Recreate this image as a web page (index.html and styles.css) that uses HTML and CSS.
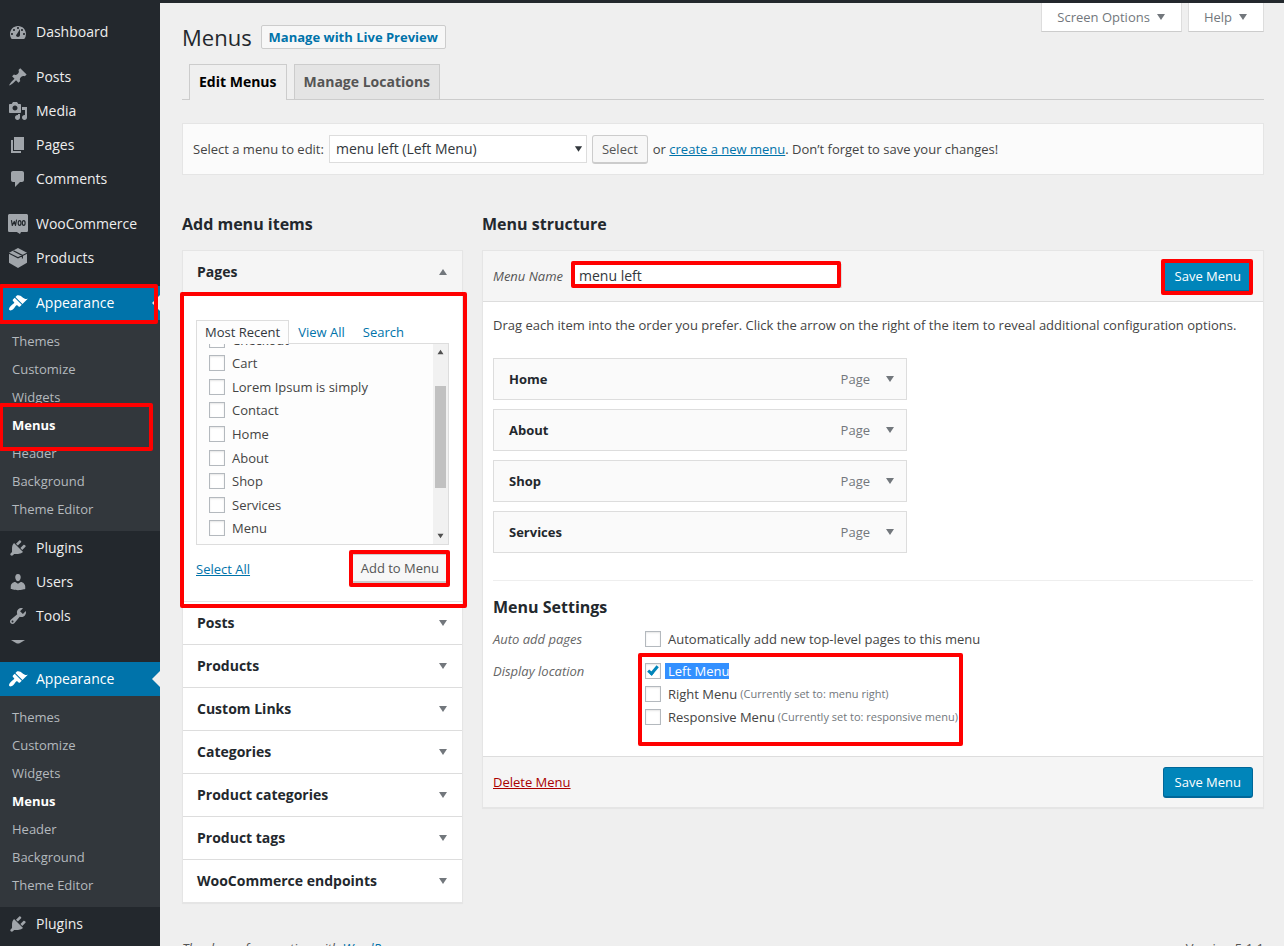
FILE: index.html
```html
<!DOCTYPE html>
<html lang="en">
<head>
<meta charset="utf-8">
<meta name="viewport" content="width=device-width, initial-scale=1">
<title>Menus</title>
<link rel="stylesheet" href="styles.css">
</head>
<body>
<svg class="sprite" aria-hidden="true">
  <symbol id="i-dashboard" viewBox="0 0 20 20"><path fill-rule="evenodd" d="M3.76 17h12.48A7.99 7.99 0 0 0 18 12c0-4.41-3.58-8-8-8s-8 3.59-8 8c0 1.9.66 3.64 1.76 5zM10 5c.55 0 1 .45 1 1s-.45 1-1 1-1-.45-1-1 .45-1 1-1zM6 7c.55 0 1 .45 1 1s-.45 1-1 1-1-.45-1-1 .45-1 1-1zm8 0c.55 0 1 .45 1 1s-.45 1-1 1-1-.45-1-1 .45-1 1-1zm-5.37 5.55L12 7v6c0 1.1-.9 2-2 2s-2-.9-2-2c0-.57.24-.08.63-.45zM4 11c.55 0 1 .45 1 1s-.45 1-1 1-1-.45-1-1 .45-1 1-1zm12 0c.55 0 1 .45 1 1s-.45 1-1 1-1-.45-1-1 .45-1 1-1z"/></symbol>
  <symbol id="i-post" viewBox="0 0 20 20"><path d="M10.44 3.02l1.82-1.82 6.36 6.35-1.83 1.82c-1.05-.68-2.48-.57-3.41.36l-.75.75c-.92.93-1.04 2.35-.35 3.41l-1.83 1.82-2.41-2.41-2.8 2.79c-.42.42-3.38 2.71-3.8 2.29s1.86-3.39 2.28-3.81l2.79-2.79L4.1 9.36l1.83-1.82c1.05.69 2.48.57 3.4-.36l.75-.75c.93-.92 1.05-2.35.36-3.41z"/></symbol>
  <symbol id="i-media" viewBox="0 0 20 20"><path fill-rule="evenodd" d="M13 11V4c0-.55-.45-1-1-1h-1.67L9 1H5L3.67 3H2c-.55 0-1 .45-1 1v7c0 .55.45 1 1 1h10c.55 0 1-.45 1-1zM7 4.5c1.38 0 2.5 1.12 2.5 2.5S8.38 9.5 7 9.5 4.5 8.38 4.5 7 5.62 4.5 7 4.5zM14 6h5v10.5c0 1.38-1.12 2.5-2.5 2.5S14 17.88 14 16.5s1.12-2.5 2.5-2.5c.17 0 .34.02.5.05V9h-3V6zm-4 8.05V13h2v3.5c0 1.38-1.12 2.5-2.5 2.5S7 17.88 7 16.5 8.12 14 9.5 14c.17 0 .34.02.5.05z"/></symbol>
  <symbol id="i-page" viewBox="0 0 20 20"><path d="M6 15V2h10v13H6zm-1 1h8v2H3V5h2v11z"/></symbol>
  <symbol id="i-comment" viewBox="0 0 20 20"><path d="M5 2h9c1.1 0 2 .9 2 2v7c0 1.1-.9 2-2 2h-2l-5 5v-5H5c-1.1 0-2-.9-2-2V4c0-1.1.9-2 2-2z"/></symbol>
  <symbol id="i-woo" viewBox="0 0 20 20"><path d="M1.6 0h16.8c.9 0 1.6.7 1.6 1.600v14.800c0 .9-.7 1.600-1.600 1.600H13l-1 2-3.200-2H1.600C.7 18 0 17.300 0 16.400V1.600C0 .7.7 0 1.600 0z"/><g fill="none" stroke="#23282d" stroke-width="1.200" stroke-linejoin="round" stroke-linecap="round"><path d="M3.500 6.500l.8 5 2-4 1.200 4 1-5.500"/><ellipse cx="11.600" cy="9" rx="1.400" ry="2.300"/><ellipse cx="15.700" cy="9" rx="1.400" ry="2.300"/></g></symbol>
  <symbol id="i-product" viewBox="0 0 20 20"><path d="M10 0l9 4.800v10L10 20l-9-5.200v-10z"/><path fill="none" stroke="#23282d" stroke-width="1.100" d="M1 5.200L10 9.800l9-4.600M5.400 2.800l9 4.600v3.200"/></symbol>
  <symbol id="i-appearance" viewBox="0 0 20 20"><path d="M14.48 11.06L7.41 3.99l1.5-1.5c.5-.56 2.3-.47 3.51.32 1.21.8 1.43 1.28 2.91 2.1 1.18.64 2.45 1.26 4.45.85zm-.71.71L6.7 4.7 4.93 6.47c-.39.39-.39 1.02 0 1.41l1.06 1.06c.39.39.39 1.03 0 1.42-.6.6-1.43 1.11-2.21 1.69-.35.26-.7.53-1.01.84C1.43 14.23.4 16.08 1.4 17.07c.99 1 2.84-.03 4.18-1.36.31-.31.58-.66.85-1.02.57-.78 1.08-1.61 1.69-2.21.39-.39 1.02-.39 1.41 0l1.06 1.06c.39.39 1.02.39 1.41 0z"/></symbol>
  <symbol id="i-plugin" viewBox="0 0 20 20"><path d="M13.11 4.36L9.87 7.6 8 5.73l3.24-3.24c.35-.34 1.05-.2 1.56.32.52.51.66 1.21.31 1.55zm-8 1.77l.91-1.12 9.01 9.01-1.19.84c-.71.71-2.63 1.16-3.82 1.16H6.14L4.9 17.26c-.59.59-1.54.59-2.12 0-.59-.58-.59-1.53 0-2.12l1.24-1.24v-3.88c0-1.13.4-3.19 1.09-3.89zm7.26 3.97l3.24-3.24c.34-.35 1.04-.21 1.55.31.52.51.66 1.21.31 1.55l-3.24 3.25z"/></symbol>
  <symbol id="i-user" viewBox="0 0 20 20"><path d="M10 9.25c-2.27 0-2.73-3.44-2.73-3.44C7 4.02 7.82 2 9.97 2c2.16 0 2.98 2.02 2.71 3.81 0 0-.41 3.44-2.68 3.44zm0 2.57L12.72 10c2.39 0 4.52 2.33 4.52 4.53v2.49s-3.65 1.13-7.24 1.13c-3.65 0-7.24-1.13-7.24-1.13v-2.49c0-2.25 1.94-4.48 4.47-4.48z"/></symbol>
  <symbol id="i-tool" viewBox="0 0 20 20"><path fill-rule="evenodd" d="M16.68 9.77c-1.34 1.34-3.3 1.67-4.95.99l-5.41 6.52c-.99.99-2.59.99-3.58 0s-.99-2.59 0-3.57l6.52-5.42c-.68-1.65-.35-3.61.99-4.95 1.28-1.28 3.12-1.62 4.72-1.06l-2.89 2.89 2.82 2.82 2.86-2.87c.53 1.58.18 3.39-1.08 4.65zM3.81 16.21c.4.39 1.04.39 1.43 0 .4-.4.4-1.04 0-1.43-.39-.4-1.03-.4-1.43 0-.39.39-.39 1.03 0 1.43z"/></symbol>
  <symbol id="i-down" viewBox="0 0 10 8"><path d="M1 1h8L5 7z"/></symbol>
  <symbol id="i-up" viewBox="0 0 10 8"><path d="M1 7h8L5 1z"/></symbol>
</svg>
<div class="topbar"></div>
<div class="admin">
  <nav class="side" aria-label="Main menu">
    <a class="side-item" href="#"><svg class="ico"><use href="#i-dashboard"/></svg>Dashboard</a>
    <a class="side-item gap" href="#"><svg class="ico"><use href="#i-post"/></svg>Posts</a>
    <a class="side-item" href="#"><svg class="ico"><use href="#i-media"/></svg>Media</a>
    <a class="side-item" href="#"><svg class="ico"><use href="#i-page"/></svg>Pages</a>
    <a class="side-item" href="#"><svg class="ico"><use href="#i-comment"/></svg>Comments</a>
    <a class="side-item gap" href="#"><svg class="ico"><use href="#i-woo"/></svg>WooCommerce</a>
    <a class="side-item" href="#"><svg class="ico"><use href="#i-product"/></svg>Products</a>
    <a class="side-item gap current" href="#"><svg class="ico"><use href="#i-appearance"/></svg>Appearance<span class="mark mark-appearance"></span></a>
    <div class="submenu">
      <a class="sub" href="#">Themes</a>
      <a class="sub" href="#">Customize</a>
      <a class="sub" href="#">Widgets</a>
      <a class="sub active" href="#">Menus<span class="mark mark-menus"></span></a>
      <a class="sub" href="#">Header</a>
      <a class="sub" href="#">Background</a>
      <a class="sub" href="#">Theme Editor</a>
    </div>
    <a class="side-item" href="#"><svg class="ico"><use href="#i-plugin"/></svg>Plugins</a>
    <a class="side-item" href="#"><svg class="ico"><use href="#i-user"/></svg>Users</a>
    <a class="side-item" href="#"><svg class="ico"><use href="#i-tool"/></svg>Tools</a>
    <div class="cut"><svg class="cut-shape" viewBox="0 0 14 4"><path d="M0 0h14L9 3q-2 1-4 0z"/></svg></div>
    <a class="side-item current" href="#"><svg class="ico"><use href="#i-appearance"/></svg>Appearance</a>
    <div class="submenu">
      <a class="sub" href="#">Themes</a>
      <a class="sub" href="#">Customize</a>
      <a class="sub" href="#">Widgets</a>
      <a class="sub active" href="#">Menus</a>
      <a class="sub" href="#">Header</a>
      <a class="sub" href="#">Background</a>
      <a class="sub" href="#">Theme Editor</a>
    </div>
    <a class="side-item" href="#"><svg class="ico"><use href="#i-plugin"/></svg>Plugins</a>
  </nav>

  <main class="content">
    <header class="head">
      <h1 class="title">Menus</h1>
      <a class="title-action" href="#">Manage with Live Preview</a>
      <div class="meta">
        <button class="meta-btn" type="button">Screen Options <svg class="tri"><use href="#i-down"/></svg></button>
        <button class="meta-btn" type="button">Help <svg class="tri"><use href="#i-down"/></svg></button>
      </div>
    </header>

    <nav class="tabs" aria-label="Menu screens">
      <a class="tab on" href="#">Edit Menus</a>
      <a class="tab" href="#">Manage Locations</a>
    </nav>

    <form class="picker">
      <label for="menu-select">Select a menu to edit:</label>
      <span class="select-wrap">
        <select class="select" id="menu-select"><option>menu left (Left Menu)</option></select>
        <svg class="select-tri"><use href="#i-down"/></svg>
      </span>
      <button class="btn" type="button">Select</button>
      <span>or <a class="link" href="#">create a new menu</a>. Don’t forget to save your changes!</span>
    </form>

    <div class="cols">
      <section>
        <h2 class="h2">Add menu items</h2>
        <div class="card">
          <button class="acc acc-open" type="button">Pages <svg class="tri"><use href="#i-up"/></svg></button>
          <div class="pages">
            <div class="ptabs">
              <a class="ptab on" href="#">Most Recent</a>
              <a class="ptab" href="#">View All</a>
              <a class="ptab" href="#">Search</a>
            </div>
            <div class="list-box">
              <div class="list">
                <label class="check"><input class="box" type="checkbox">Checkout</label>
                <label class="check"><input class="box" type="checkbox">Cart</label>
                <label class="check"><input class="box" type="checkbox">Lorem Ipsum is simply</label>
                <label class="check"><input class="box" type="checkbox">Contact</label>
                <label class="check"><input class="box" type="checkbox">Home</label>
                <label class="check"><input class="box" type="checkbox">About</label>
                <label class="check"><input class="box" type="checkbox">Shop</label>
                <label class="check"><input class="box" type="checkbox">Services</label>
                <label class="check"><input class="box" type="checkbox">Menu</label>
              </div>
              <div class="scroll">
                <svg class="scroll-tri"><use href="#i-up"/></svg>
                <div class="track"><div class="thumb"></div></div>
                <svg class="scroll-tri"><use href="#i-down"/></svg>
              </div>
            </div>
            <div class="pages-foot">
              <a class="link" href="#">Select All</a>
              <span class="marked"><button class="btn" type="button">Add to Menu</button><span class="mark mark-add"></span></span>
            </div>
            <span class="mark mark-pages"></span>
          </div>
          <button class="acc" type="button">Posts <svg class="tri"><use href="#i-down"/></svg></button>
          <button class="acc" type="button">Products <svg class="tri"><use href="#i-down"/></svg></button>
          <button class="acc" type="button">Custom Links <svg class="tri"><use href="#i-down"/></svg></button>
          <button class="acc" type="button">Categories <svg class="tri"><use href="#i-down"/></svg></button>
          <button class="acc" type="button">Product categories <svg class="tri"><use href="#i-down"/></svg></button>
          <button class="acc" type="button">Product tags <svg class="tri"><use href="#i-down"/></svg></button>
          <button class="acc" type="button">WooCommerce endpoints <svg class="tri"><use href="#i-down"/></svg></button>
        </div>
      </section>

      <section>
        <h2 class="h2">Menu structure</h2>
        <form class="card">
          <div class="bar bar-top">
            <label class="name-label" for="menu-name">Menu Name</label>
            <span class="marked"><input class="name" id="menu-name" type="text" value="menu left"><span class="mark mark-name"></span></span>
            <span class="marked push"><button class="btn primary" type="button">Save Menu</button><span class="mark mark-save"></span></span>
          </div>
          <div class="body">
            <p class="hint">Drag each item into the order you prefer. Click the arrow on the right of the item to reveal additional configuration options.</p>
            <div class="items">
              <div class="item"><b class="item-name">Home</b><span>Page</span><svg class="tri"><use href="#i-down"/></svg></div>
              <div class="item"><b class="item-name">About</b><span>Page</span><svg class="tri"><use href="#i-down"/></svg></div>
              <div class="item"><b class="item-name">Shop</b><span>Page</span><svg class="tri"><use href="#i-down"/></svg></div>
              <div class="item"><b class="item-name">Services</b><span>Page</span><svg class="tri"><use href="#i-down"/></svg></div>
            </div>
            <div class="settings">
              <h3 class="h3">Menu Settings</h3>
              <div class="set">
                <span class="set-name">Auto add pages</span>
                <label class="check"><input class="box" type="checkbox">Automatically add new top-level pages to this menu</label>
              </div>
              <div class="set">
                <span class="set-name">Display location</span>
                <div class="locs">
                  <label class="check"><input class="box" type="checkbox" checked><span class="selected">Left Menu</span></label>
                  <label class="check"><input class="box" type="checkbox">Right Menu <small class="now">(Currently set to: menu right)</small></label>
                  <label class="check"><input class="box" type="checkbox">Responsive Menu <small class="now">(Currently set to: responsive menu)</small></label>
                  <span class="mark mark-locs"></span>
                </div>
              </div>
            </div>
          </div>
          <div class="bar bar-bottom">
            <a class="link danger" href="#">Delete Menu</a>
            <button class="btn primary push" type="button">Save Menu</button>
          </div>
        </form>
      </section>
    </div>

    <footer class="foot">
      <i>Thank you for creating with <a class="foot-link" href="#">WordPress</a>.</i>
      <span>Version 5.1.1</span>
    </footer>
  </main>
</div>
</body>
</html>
```
FILE: styles.css
```css
* { box-sizing: border-box; }

body {
  margin: 0;
  height: 100vh;
  overflow: hidden;
  background: #efefef;
  color: #444;
  font: 13px/20px "Open Sans", sans-serif;
}

button, input, select { font: inherit; color: inherit; }
button { cursor: pointer; }
h1, h2, h3, p { margin: 0; }
.sprite { display: none; }

.topbar { height: 3px; background: #23282d; }
.admin { display: flex; align-items: flex-start; }

/* Sidebar */
.side {
  flex: 0 0 160px;
  min-height: 100vh;
  padding-top: 12px;
  background: #23282d;
}
.side-item {
  position: relative;
  display: flex;
  align-items: center;
  gap: 8px;
  height: 34px;
  padding: 0 8px;
  color: #eee;
  font-size: 14px;
  text-decoration: none;
}
.gap { margin-top: 11px; }
.ico { width: 20px; height: 20px; fill: #a0a5aa; }
.current { background: #0073aa; color: #fff; }
.current .ico { fill: #fff; }
.current::after {
  content: "";
  position: absolute;
  right: 0;
  top: 9px;
  border: 8px solid transparent;
  border-left: 0;
  border-right-color: #efefef;
}
.submenu { padding: 7px 0 8px; background: #32373c; }
.sub {
  position: relative;
  display: block;
  padding: 4px 12px;
  color: #b4b9be;
  text-decoration: none;
}
.sub.active { color: #fff; font-weight: 700; }
.cut { height: 29px; padding: 7px 11px; }
.cut-shape { display: block; width: 14px; height: 4px; fill: #a0a5aa; }

/* Red highlight frames drawn over the screen */
.marked { position: relative; display: flex; }
.mark {
  position: absolute;
  z-index: 2;
  border: 4px solid #f00;
  border-radius: 2px;
  pointer-events: none;
}
.mark-appearance { inset: -2px 2px -4px -1px; }
.mark-menus { inset: -8px 7px -12px -1px; }
.mark-pages { inset: -2px -5px -7px -3px; }
.mark-add { inset: -4px -1px -4px -2px; }
.mark-name { inset: -3px 1px 0 -2px; }
.mark-save { inset: -2px 0 -3px -2px; }
.mark-locs { inset: -8px auto -19px -7px; width: 325px; }

/* Page header */
.content { flex: 1; min-width: 0; padding: 0 20px 0 22px; }
.head { display: flex; align-items: flex-start; gap: 9px; height: 61px; }
.title { padding-top: 19px; color: #23282d; font-size: 22px; font-weight: 400; line-height: 30px; }
.title-action {
  margin-top: 22px;
  padding: 1px 7px;
  border: 1px solid #ccc;
  border-radius: 2px;
  background: #f7f7f7;
  color: #0073aa;
  font-weight: 700;
  text-decoration: none;
}
.meta { display: flex; gap: 6px; margin-left: auto; }
.meta-btn {
  display: flex;
  align-items: center;
  gap: 6px;
  height: 29px;
  padding: 0 15px;
  border: 1px solid #ddd;
  border-top: 0;
  border-bottom-color: #ccc;
  background: #fff;
  color: #72777c;
}
.tri { width: 10px; height: 8px; fill: #72777c; }

.tabs { display: flex; gap: 7px; padding: 0 7px; border-bottom: 1px solid #ccc; }
.tab {
  padding: 5px 9px;
  border: 1px solid #ccc;
  border-bottom: 0;
  background: #e4e4e4;
  color: #555;
  font-size: 14px;
  font-weight: 700;
  line-height: 24px;
  text-decoration: none;
}
.tab.on { margin-bottom: -1px; background: #efefef; color: #000; }

.picker {
  display: flex;
  align-items: center;
  gap: 5px;
  height: 52px;
  margin-top: 23px;
  padding: 0 10px;
  border: 1px solid #e5e5e5;
  background: #fbfbfb;
}
.select-wrap { position: relative; }
.select {
  display: block;
  appearance: none;
  width: 258px;
  height: 28px;
  padding: 0 6px;
  border: 1px solid #ddd;
  border-radius: 0;
  background: #fff;
  color: #32373c;
  font-size: 14px;
}
.select-tri { position: absolute; right: 4px; top: 10px; width: 9px; height: 8px; fill: #32373c; pointer-events: none; }
.btn {
  height: 29px;
  padding: 0 9px;
  border: 1px solid #ccc;
  border-bottom-width: 2px;
  border-radius: 3px;
  background: #f7f7f7;
  color: #555;
}
.primary {
  height: 31px;
  padding: 0 11px;
  border-color: #006799;
  background: #0085ba;
  color: #fff;
}
.link { color: #0073aa; text-decoration: underline; }
.danger { color: #a00; }

/* Columns */
.cols { display: grid; grid-template-columns: 281px minmax(0, 1fr); gap: 19px; align-items: start; margin-top: 37px; }
.h2 { margin-bottom: 14px; color: #23282d; font-size: 16px; line-height: 24px; }
.card { border: 1px solid #e5e5e5; background: #fff; box-shadow: 0 1px 1px rgba(0, 0, 0, .04); }

.acc {
  display: flex;
  align-items: center;
  justify-content: space-between;
  width: 100%;
  height: 43px;
  padding: 0 14px;
  border: 0;
  border-bottom: 1px solid #ddd;
  background: #fff;
  color: #23282d;
  font-size: 14px;
  font-weight: 700;
}
.acc:last-child { height: 42px; border-bottom: 0; }
.acc-open { background: #f5f5f5; }
.pages { position: relative; padding: 26px 13px 18px; border-bottom: 1px solid #e5e5e5; }
.ptabs { display: flex; }
.ptab { padding: 0 8px; border: 1px solid transparent; border-bottom: 0; color: #0073aa; line-height: 22px; text-decoration: none; }
.ptab.on { position: relative; margin-bottom: -1px; border-color: #ddd; background: #fdfdfd; color: #32373c; }
.list-box { display: flex; height: 202px; border: 1px solid #ddd; background: #fdfdfd; overflow: hidden; }
.list {
  display: grid;
  grid-auto-rows: 1fr;
  flex: 1;
  align-self: flex-end;
  height: 212px;
  margin-bottom: 4px;
  padding-left: 12px;
}
.check { display: flex; align-items: center; gap: 7px; min-height: 20px; }
.box {
  appearance: none;
  flex: none;
  width: 16px;
  height: 16px;
  margin: 0;
  border: 1px solid #b4b9be;
  background: #fff;
  box-shadow: inset 0 1px 2px rgba(0, 0, 0, .1);
}
.box:checked::before {
  content: "";
  display: block;
  box-sizing: content-box;
  width: 3px;
  height: 8px;
  margin: 0 auto;
  border: solid #0085ba;
  border-width: 0 3px 3px 0;
  rotate: 40deg;
}
.scroll { display: flex; flex-direction: column; align-items: center; width: 15px; padding: 5px 0; background: #f1f1f1; }
.scroll-tri { width: 9px; height: 6px; fill: #505050; }
.track { flex: 1; padding-top: 31px; }
.thumb { width: 11px; height: 102px; background: #c1c1c1; }
.pages-foot { display: flex; align-items: center; justify-content: space-between; margin-top: 9px; }

/* Menu structure */
.bar { display: flex; align-items: center; padding: 0 10px; background: #f5f5f5; }
.bar-top { height: 51px; border-bottom: 1px solid #ddd; }
.bar-bottom { height: 51px; border-top: 1px solid #ddd; }
.push { margin-left: auto; }
.name-label { width: 80px; font-style: italic; color: #555; }
.name {
  width: 269px;
  height: 24px;
  padding: 0 5px 2px;
  border: 1px solid #ddd;
  background: #fff;
  color: #32373c;
  font-size: 14px;
}
.body { padding: 13px 10px 29px; }
.items { display: grid; gap: 9px; max-width: 414px; margin-top: 23px; }
.item {
  display: flex;
  align-items: center;
  height: 42px;
  padding: 0 11px 0 15px;
  border: 1px solid #ddd;
  background: #fafafa;
  color: #72777c;
}
.item .tri { margin-left: 15px; }
.item-name { margin-right: auto; color: #23282d; }
.settings { margin-top: 27px; padding-top: 14px; border-top: 1px solid #eee; }
.h3 { margin-bottom: 10px; color: #23282d; font-size: 16px; line-height: 24px; }
.set { display: grid; grid-template-columns: 152px minmax(0, 1fr); margin-bottom: 12px; }
.set:last-child { margin-bottom: 0; }
.set-name { color: #666; font-style: italic; }
.locs { position: relative; display: grid; gap: 3px; }
.selected { margin-left: -3px; padding-left: 3px; background: #3390ff; color: #fff; line-height: 16px; }
.now { margin-left: -4px; color: #72777c; font-size: 11px; }

.foot { display: flex; justify-content: space-between; margin-top: 35px; color: #555; }
.foot-link { color: #0073aa; text-decoration: none; }
```
